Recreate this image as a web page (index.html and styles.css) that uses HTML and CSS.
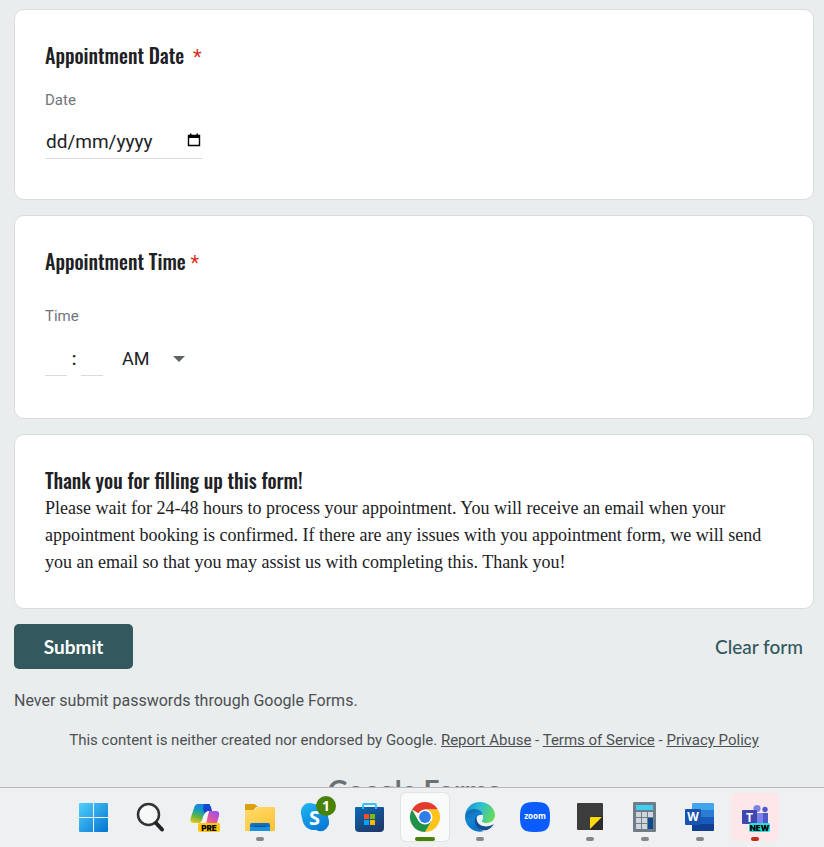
FILE: index.html
```html
<!DOCTYPE html>
<html lang="en">
<head>
<meta charset="utf-8">
<meta name="viewport" content="width=device-width, initial-scale=1">
<title>Appointment form</title>
<link rel="stylesheet" href="styles.css">
</head>
<body>
<main class="page">
  <form class="form">
    <section class="card">
      <h2 class="question">Appointment Date <span class="required wide">*</span></h2>
      <label class="hint" for="date">Date</label>
      <div class="date-field">
        <input id="date" class="date-input" type="text" placeholder="dd/mm/yyyy">
        <button class="calendar" type="button" aria-label="Open calendar">
          <svg width="14" height="14" viewBox="0 0 14 14"><path d="M1.500 2.500h11v10h-11z" fill="none" stroke="#000" stroke-width="1.400"/><path d="M1 2h12v3H1zM3 .5h1.500V3H3zM9.500 .5H11V3H9.500z" fill="#000"/></svg>
        </button>
      </div>
    </section>

    <section class="card card-time">
      <h2 class="question">Appointment Time <span class="required">*</span></h2>
      <span class="hint">Time</span>
      <div class="time-field">
        <input class="time-input" type="text" aria-label="Hour" maxlength="2">
        <span class="colon">:</span>
        <input class="time-input" type="text" aria-label="Minute" maxlength="2">
        <div class="meridiem">
          <select class="meridiem-select" aria-label="AM or PM"><option>AM</option><option>PM</option></select>
          <svg class="arrow" width="12" height="6" viewBox="0 0 12 6"><path d="M0 0h12L6 6z" fill="#5f6368"/></svg>
        </div>
      </div>
    </section>

    <section class="card card-thanks">
      <h2 class="question">Thank you for filling up this form!</h2>
      <p class="message">Please wait for 24-48 hours to process your appointment. You will receive an email when your appointment booking is confirmed. If there are any issues with you appointment form, we will send you an email so that you may assist us with completing this. Thank you!</p>
    </section>

    <div class="actions">
      <button class="submit" type="submit">Submit</button>
      <button class="clear" type="reset">Clear form</button>
    </div>
  </form>
  <p class="warning">Never submit passwords through Google Forms.</p>
  <p class="legal">This content is neither created nor endorsed by Google. <a href="#">Report Abuse</a> - <a href="#">Terms of Service</a> - <a href="#">Privacy Policy</a></p>
  <div class="brand">Google Forms</div>
</main>

<nav class="taskbar" aria-label="Taskbar">
  <button class="app" aria-label="Start"><svg viewBox="0 0 48 48">
    <defs><linearGradient id="win" gradientUnits="userSpaceOnUse" x1="8" y1="10" x2="37" y2="39"><stop offset="0" stop-color="#4fd0fb"/><stop offset="1" stop-color="#0473d0"/></linearGradient></defs>
    <path fill="url(#win)" d="M9 10h13v14H8V11q0-1 1-1zM23 10h13q1 0 1 1v13H23zM8 25h14v14H9q-1 0-1-1zM23 25h14v13q0 1-1 1H23z"/></svg></button>

  <button class="app" aria-label="Search"><svg viewBox="0 0 48 48">
    <circle cx="22.500" cy="21.500" r="10.500" fill="#f7f8f8" stroke="#333" stroke-width="2.500"/><path d="M30 30l6 6.500" stroke="#222" stroke-width="4" stroke-linecap="round"/></svg></button>

  <button class="app" aria-label="Copilot"><svg viewBox="0 0 48 48">
    <defs>
      <linearGradient id="cp1" x1=".5" y1="0" x2=".2" y2="1"><stop offset="0" stop-color="#1683e8"/><stop offset=".35" stop-color="#1a9db5"/><stop offset=".65" stop-color="#5fb547"/><stop offset="1" stop-color="#f3c514"/></linearGradient>
      <linearGradient id="cp2" x1=".8" y1="0" x2=".2" y2="1"><stop offset="0" stop-color="#a14df0"/><stop offset=".5" stop-color="#e0569c"/><stop offset="1" stop-color="#ff9355"/></linearGradient>
    </defs>
    <path fill="url(#cp1)" d="M17 11h12l-6 14q-1.500 5-5 5h-5q-5 0-3-6l3-9q1-4 4-4z"/>
    <path fill="#1548cf" d="M23 11h4q2 0 3 3l1 4h-3q-3 0-4 3-3-4-1-10z"/>
    <path fill="url(#cp2)" d="M28 18h7q4 0 3 5l-3 10q-1 3-4 3h-9q2-1 3-5l3-13z"/>
    <path fill="#f8f2f5" d="M28 18l-5 13h-5q3-2 4-7 2-6 6-6z"/>
    <rect x="17" y="30" width="22" height="9" rx="2" fill="#ffc60f"/><text x="28" y="37.500" class="badge-text">PRE</text></svg></button>

  <button class="app" aria-label="File Explorer"><svg viewBox="0 0 48 48">
    <defs><linearGradient id="fold" x1="0" y1="0" x2=".8" y2="1"><stop offset="0" stop-color="#ffdc70"/><stop offset="1" stop-color="#ffc336"/></linearGradient></defs>
    <path fill="#dda00b" d="M10 11h8q1 0 2 1l2 2h-2l-3 4H9v-6q0-1 1-1z"/><path fill="url(#fold)" d="M9 17h8q2 0 3-1l2-2h16q1 0 1 1v22q0 1-1 1H10q-1 0-1-1z"/>
    <path fill="#1170bd" d="M16 30h16q2 0 2 2v5H14v-5q0-2 2-2z"/><path fill="#1d8fe0" d="M14 34h20v4H14z"/><path d="M18 33.500h12" stroke="#07539c" stroke-width="1.200"/>
    <rect class="dot" x="20" y="44" width="8" height="4" rx="2"/></svg></button>

  <button class="app" aria-label="Skype, 1 notification"><svg viewBox="0 0 48 48">
    <defs><linearGradient id="sky" x1="0" y1="0" x2=".6" y2="1"><stop offset="0" stop-color="#20b8f2"/><stop offset="1" stop-color="#087bd8"/></linearGradient></defs>
    <path fill="url(#sky)" d="M18 10q3 0 5 1 13 0 14 13 3 7-2 12-4 4-10 1-12 1-14-12-3-8 2-13 2-2 5-2z"/>
    <text x="23.500" y="31.500" class="logo-text skype">S</text>
    <circle cx="35" cy="13" r="10" fill="#498205"/><text x="35" y="18" class="logo-text count">1</text></svg></button>

  <button class="app" aria-label="Microsoft Store"><svg viewBox="0 0 48 48">
    <defs><linearGradient id="store" x1="0" y1="0" x2=".6" y2="1"><stop offset="0" stop-color="#0a69b8"/><stop offset="1" stop-color="#1e3a6c"/></linearGradient></defs>
    <path fill="url(#store)" d="M10 14h27q1 0 1 1v20q0 4-4 4H13q-4 0-4-4V15q0-1 1-1z"/><path d="M17 16v-4q0-1 1-1h11q1 0 1 1v4" fill="none" stroke="#35c2f5" stroke-width="1.800"/>
    <path fill="#f25022" d="M18 21h5v5h-5z"/><path fill="#7fba00" d="M24 21h5v5h-5z"/><path fill="#00a4ef" d="M18 27h5v5h-5z"/><path fill="#ffb900" d="M24 27h5v5h-5z"/></svg></button>

  <button class="app app-current" aria-label="Google Chrome"><svg viewBox="0 0 48 48">
    <path fill="#e33b2e" d="M24 24L11 16.500A15 15 0 0 1 37 16.500H24z"/><path fill="#ffc31b" d="M37 16.500A15 15 0 0 1 24 39L30.500 27.750 24 16.500z"/><path fill="#209247" d="M11 16.500A15 15 0 0 0 24 39L30.500 27.750 17.500 27.750z"/>
    <circle cx="24" cy="24" r="7.500" fill="#fff"/><circle cx="24" cy="24" r="5.900" fill="#2f7de9"/>
    <rect x="14" y="44" width="20" height="4" rx="2" fill="#498205"/></svg></button>

  <button class="app" aria-label="Microsoft Edge"><svg viewBox="0 0 48 48">
    <defs><linearGradient id="ed1" x1="0" y1=".3" x2="1" y2=".6"><stop offset="0" stop-color="#198fd4"/><stop offset=".45" stop-color="#2fbfd2"/><stop offset="1" stop-color="#68dc54"/></linearGradient>
    <linearGradient id="ed2" x1="0" y1="0" x2=".4" y2="1"><stop offset="0" stop-color="#15609f"/><stop offset=".5" stop-color="#1185d5"/><stop offset="1" stop-color="#0b70c9"/></linearGradient></defs>
    <path fill="url(#ed1)" d="M9 24C9 15 16 9 24 9c9 0 15 7 15 13 0 5-4 8-9 8-4 0-5-2-4-3 4-7-3-10-7-10-6 0-10 4-10 7z"/>
    <path fill="url(#ed2)" d="M9 24c0-4 4-8 9-8 5 0 9 3 9 6-5-1-8 3-7 8 1 4 4 7 8 8C18 41 9 33 9 24z"/>
    <path fill="#124c91" d="M20 23c-4 7 2 16 11 14 3-1 5-3 7-6-6 4-15 3-17-3z"/>
    <path fill="#edf3f5" d="M21 25c0-3 6-4 6 0 0 2-2 2-1 4 1 1 4 1 6 1-5 2-11 0-11-5z"/>
    <rect class="dot" x="20" y="44" width="8" height="4" rx="2"/></svg></button>

  <button class="app" aria-label="Zoom"><svg viewBox="0 0 48 48">
    <path fill="#0b5cff" d="M24 9c12 0 15 3 15 15s-3 15-15 15S9 36 9 24 12 9 24 9z"/><text x="24" y="26" class="logo-text zoom">zoom</text></svg></button>

  <button class="app" aria-label="Sticky Notes"><svg viewBox="0 0 48 48">
    <rect x="11" y="10" width="26" height="27" rx="1" fill="#3c3c3c"/><path fill="#2b2b2b" d="M24 37V24l13-1v13q0 1-1 1z"/><path fill="#fddb08" d="M25 24h11L24 36V25q0-1 1-1z"/>
    <rect class="dot" x="20" y="44" width="8" height="4" rx="2"/></svg></button>

  <button class="app" aria-label="Calculator"><svg viewBox="0 0 48 48">
    <rect x="12" y="9" width="23" height="30" rx="1" fill="#707c87"/><path fill="#43cff2" d="M15 12h17v5H15z"/>
    <path fill="#ced7de" d="M15 19h5v5h-5zM21 19h5v5h-5zM27 19h5v5h-5zM15 25h5v5h-5zM21 25h5v5h-5zM15 31h5v5h-5zM21 31h5v5h-5z"/><path fill="#114a8b" d="M27 25h5v11h-5z"/>
    <rect class="dot" x="20" y="44" width="8" height="4" rx="2"/></svg></button>

  <button class="app" aria-label="Word"><svg viewBox="0 0 48 48">
    <path fill="#41a5ee" d="M17 10h20q1 0 1 1v6H16v-6q0-1 1-1z"/><path fill="#2b7cd3" d="M16 17h22v7H16z"/><path fill="#185abd" d="M16 24h22v7H16z"/><path fill="#103f91" d="M16 31h22v6q0 1-1 1H17q-1 0-1-1z"/>
    <rect x="9" y="16" width="16" height="16" rx="1" fill="#1853b2"/><text x="17" y="28" class="logo-text letter">W</text>
    <rect class="dot" x="20" y="44" width="8" height="4" rx="2"/></svg></button>

  <button class="app app-alert" aria-label="Microsoft Teams"><svg viewBox="0 0 48 48">
    <circle cx="26" cy="15.500" r="3.600" fill="#7b83eb"/><circle cx="34" cy="16.500" r="2.700" fill="#5059c9"/><path fill="#5059c9" d="M30 20h7v10q0 2-3 2h-4z"/><path fill="#7b83eb" d="M22 20h10v12H22z"/>
    <rect x="11" y="17" width="15" height="14" rx="1" fill="#4048b0"/><text x="18.500" y="28.500" class="logo-text letter">T</text>
    <rect x="18" y="30" width="21" height="9" rx="2" fill="#29e0dd"/><text x="28.500" y="37.500" class="badge-text">NEW</text>
    <rect x="20" y="44" width="8" height="4" rx="2" fill="#c42b1c"/></svg></button>
</nav>
</body>
</html>
```
FILE: styles.css
```css
* { box-sizing: border-box; }

body {
  display: flex;
  flex-direction: column;
  height: 100vh;
  margin: 0;
  background: #e9edee;
  color: #202124;
  font-family: Roboto, "Liberation Sans", sans-serif;
}

button, input, select {
  margin: 0;
  padding: 0;
  border: 0;
  border-radius: 0;
  background: none;
  color: inherit;
  font: inherit;
}

.page {
  flex: 1;
  min-height: 0;
  padding: 9px 10px 0 14px;
  overflow-y: auto;
  scrollbar-width: none;
}

.form {
  display: flex;
  flex-direction: column;
  gap: 15px;
}

.card {
  display: flex;
  flex-direction: column;
  align-items: flex-start;
  padding: 31px 30px 40px;
  border: 1px solid #dadce0;
  border-radius: 10px;
  background: #fff;
}

.question {
  margin: 0;
  font: 500 20px/28px Oswald, "Liberation Sans Narrow", sans-serif;
}

.required {
  color: #d93025;
  font: 20px/28px Roboto, sans-serif;
}

.wide { margin-left: 4px; }

.hint {
  margin-top: 19px;
  color: #70757a;
  font-size: 15px;
  line-height: 20px;
}

.date-field {
  display: flex;
  align-items: center;
  width: 158px;
  height: 34px;
  margin-top: 15px;
  border-bottom: 1px solid #dadce0;
}

.date-input {
  flex: 1;
  min-width: 0;
  padding-left: 1px;
  font-size: 19px;
}

.date-input::placeholder { color: #202124; }

.calendar {
  display: flex;
  padding: 0 2px 4px 0;
}

.card-time .hint { margin-top: 29px; }

.card-time { padding-bottom: 42px; }

.time-field {
  display: flex;
  align-items: center;
  margin-top: 15px;
  font-size: 18px;
}

.time-input {
  width: 22px;
  height: 35px;
  border-bottom: 1px solid #dadce0;
}

.colon {
  width: 14px;
  font-weight: 500;
  text-align: center;
}

.meridiem {
  display: flex;
  align-items: center;
  margin-left: 19px;
}

.meridiem-select {
  width: 51px;
  appearance: none;
}

.card-thanks { padding-bottom: 32px; }

.message {
  margin: 1px 0 0;
  font: 18px/27px "Liberation Serif", serif;
}

.actions {
  display: flex;
  align-items: center;
  justify-content: space-between;
}

.submit {
  width: 119px;
  height: 45px;
  border-radius: 5px;
  background: #33585d;
  color: #fff;
  font: bold 19px/24px Lato, sans-serif;
}

.clear {
  padding: 0 11px;
  color: #33585d;
  font: 500 19px/24px Lato, sans-serif;
}

.warning, .legal {
  margin: 0;
  color: #4d5053;
  font-size: 15px;
  line-height: 20px;
}

.warning {
  margin-top: 22px;
  font-size: 16px;
}

.legal {
  margin-top: 19px;
  text-align: center;
}

.legal a { color: inherit; }

.brand {
  margin-top: 20px;
  color: #6d7073;
  font: bold 28px/40px Lato, sans-serif;
  text-align: center;
}

.taskbar {
  display: flex;
  flex: none;
  justify-content: center;
  gap: 7px;
  padding: 5px 0 6px 26px;
  border-top: 1px solid #b7babc;
  background: #eef0f1;
}

.app {
  width: 48px;
  height: 48px;
  border-radius: 5px;
}

.app svg { display: block; }

.app-current {
  background: #f9fafa;
  box-shadow: 0 0 0 1px #e1e4e5;
}

.app-alert { background: #fde7e8; }

.dot { fill: #858789; }

.badge-text {
  font: 900 8px Inter, sans-serif;
  text-anchor: middle;
}

.logo-text {
  fill: #fff;
  font-family: "Open Sans", sans-serif;
  font-weight: bold;
  text-anchor: middle;
}

.skype { font-size: 20px; }
.count { font-size: 14px; }
.zoom { font-size: 8px; }
.letter { font-size: 12px; }
```
